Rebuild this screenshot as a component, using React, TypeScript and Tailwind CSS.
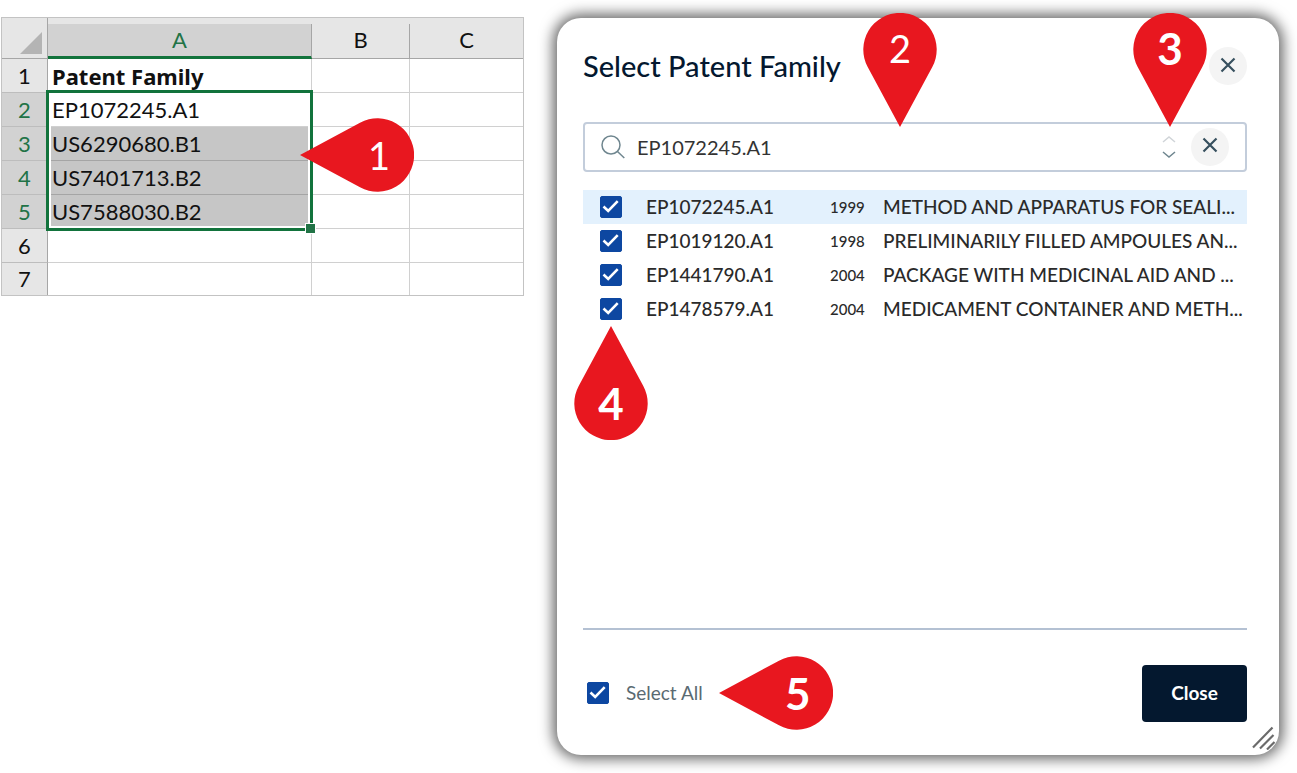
import React, { useState } from "react";

type Direction = "down" | "up" | "left";

const DROP: Record<Direction, { viewBox: string; path: string; size: string; label: string }> = {
  down: {
    viewBox: "0 0 74 114",
    path: "M37 114 L4.7 54 A36.7 36.7 0 1 1 69.3 54 Z",
    size: "h-[114px] w-[74px]",
    label: "inset-x-0 top-0 pb-1",
  },
  up: {
    viewBox: "0 0 74 114",
    path: "M37 0 L4.7 60 A36.7 36.7 0 1 0 69.3 60 Z",
    size: "h-[114px] w-[74px]",
    label: "inset-x-0 bottom-0",
  },
  left: {
    viewBox: "0 0 114 74",
    path: "M0 37 L60 4.7 A36.7 36.7 0 1 1 60 69.3 Z",
    size: "h-[74px] w-[114px]",
    label: "inset-y-0 right-0 pl-1",
  },
};

function Marker({
  n,
  direction,
  bold = false,
  className = "",
}: {
  n: number;
  direction: Direction;
  bold?: boolean;
  className?: string;
}) {
  const d = DROP[direction];
  return (
    <span className={`pointer-events-none block ${d.size} ${className}`}>
      <svg viewBox={d.viewBox} className="block h-full w-full" aria-hidden="true">
        <path d={d.path} fill="#e8171f" />
      </svg>
      <span
        className={`absolute flex h-[74px] w-[74px] items-center justify-center leading-none text-white ${d.label} ${
          bold ? "text-[44px] font-bold" : "text-[38px]"
        }`}
      >
        {n}
      </span>
    </span>
  );
}

const SHEET_ROWS = [
  { n: 1, value: "Patent Family" },
  { n: 2, value: "EP1072245.A1" },
  { n: 3, value: "US6290680.B1" },
  { n: 4, value: "US7401713.B2" },
  { n: 5, value: "US7588030.B2" },
  { n: 6, value: "" },
  { n: 7, value: "" },
];

function Spreadsheet() {
  return (
    <div className="relative mt-[17px] ml-px w-[523px] shrink-0 border border-[#c3c3c3] text-[22px] text-[#111]">
      <table className="w-full table-fixed border-separate border-spacing-0">
        <colgroup>
          <col className="w-[46px]" />
          <col className="w-[264px]" />
          <col className="w-[98px]" />
          <col />
        </colgroup>
        <thead>
          <tr className="bg-[#e6e6e6]">
            <th className="border-r border-b border-[#a6a6a6] p-0 align-bottom">
              <svg viewBox="0 0 22 22" className="mb-1 ml-[18px] h-[22px] w-[22px]" aria-hidden="true">
                <path d="M22 0 V22 H0 Z" fill="#b4b4b4" />
              </svg>
            </th>
            <th className="p-0 pt-[6px] font-normal text-[#217346]">
              <div className="h-[35px] border-r border-b-3 border-r-[#a6a6a6] border-b-[#12733c] bg-[#d2d2d2] leading-8">A</div>
            </th>
            <th className="p-0 pt-[6px] font-normal">
              <div className="h-[35px] border-r border-b border-[#a6a6a6] leading-8">B</div>
            </th>
            <th className="p-0 pt-[6px] font-normal">
              <div className="h-[35px] border-b border-[#a6a6a6] leading-8">C</div>
            </th>
          </tr>
        </thead>
        <tbody>
          {SHEET_ROWS.map(({ n, value }) => {
            const selected = n >= 2 && n <= 5;
            const shaded = n >= 3 && n <= 5;
            const line = n === 7 ? "border-b-0 h-8" : "border-b h-[34px]";
            return (
              <tr key={n} className="leading-8">
                <th
                  className={`border-r border-r-[#a6a6a6] border-b-[#bdbdbd] p-0 font-normal ${line} ${
                    selected ? "bg-[#d2d2d2] text-[#217346]" : "bg-[#e6e6e6]"
                  }`}
                >
                  {n}
                </th>
                <td
                  className={`border-r py-0 pr-0 pl-1 ${line} ${
                    n === 1 ? "font-['Noto_Sans','Open_Sans',sans-serif] font-bold" : ""
                  } ${shaded ? "border-[#a5a5a5] bg-[#c6c6c6]" : "border-[#d0d0d0]"}`}
                >
                  {value}
                </td>
                <td className={`border-r border-[#d0d0d0] p-0 ${line}`} />
                <td className={`border-[#d0d0d0] p-0 ${line}`} />
              </tr>
            );
          })}
        </tbody>
      </table>
      <div className="pointer-events-none absolute top-[72px] left-[44px] h-[141px] w-[267px] border-3 border-[#12733c]">
        <div className="h-full border-2 border-t-0 border-white" />
        <div className="absolute -right-[6px] -bottom-[6px] h-[11px] w-[11px] border border-white bg-[#217346]" />
      </div>
      <Marker n={1} direction="left" className="absolute top-[100px] left-[298px]" />
    </div>
  );
}

function Check({
  id,
  checked,
  onChange,
}: {
  id: string;
  checked: boolean;
  onChange: () => void;
}) {
  return (
    <span className="grid h-[22px] w-[22px] shrink-0 place-items-center">
      <input
        id={id}
        type="checkbox"
        checked={checked}
        onChange={onChange}
        className="col-start-1 row-start-1 h-[22px] w-[22px] appearance-none rounded-xs border border-[#0d47a1] bg-white checked:bg-[#0d47a1]"
      />
      {checked && (
        <svg viewBox="0 0 22 22" className="pointer-events-none col-start-1 row-start-1 h-[22px] w-[22px]" aria-hidden="true">
          <path d="M3.5 10.5 L8.2 15 L17.7 5.2" fill="none" stroke="#fff" strokeWidth="2.6" />
        </svg>
      )}
    </span>
  );
}

function Cross() {
  return (
    <svg viewBox="0 0 16 16" className="mb-[3px] h-4 w-4" aria-hidden="true">
      <path d="M1.5 1.5 L14.5 14.5 M14.5 1.5 L1.5 14.5" stroke="#37505f" strokeWidth="2.2" fill="none" />
    </svg>
  );
}

const PATENTS = [
  { id: "EP1072245.A1", year: 1999, title: "METHOD AND APPARATUS FOR SEALI..." },
  { id: "EP1019120.A1", year: 1998, title: "PRELIMINARILY FILLED AMPOULES AN..." },
  { id: "EP1441790.A1", year: 2004, title: "PACKAGE WITH MEDICINAL AID AND ..." },
  { id: "EP1478579.A1", year: 2004, title: "MEDICAMENT CONTAINER AND METH..." },
];

function PatentDialog() {
  const [query, setQuery] = useState("EP1072245.A1");
  const [picked, setPicked] = useState<string[]>(PATENTS.map((p) => p.id));
  const all = picked.length === PATENTS.length;
  const toggle = (id: string) =>
    setPicked((s) => (s.includes(id) ? s.filter((x) => x !== id) : [...s, id]));

  return (
    <section
      role="dialog"
      aria-labelledby="dialog-title"
      className="relative mt-[18px] mr-[18px] ml-[33px] min-w-0 flex-1 rounded-3xl bg-white pr-8 pb-[25px] pl-[26px] shadow-[0_0_14px_4px_rgba(0,0,0,0.6)]"
    >
      <header className="flex items-center justify-between pt-7">
        <h1 id="dialog-title" className="text-[29px] leading-10 font-medium text-[#04182f]">
          Select Patent Family
        </h1>
        <button
          type="button"
          aria-label="Close dialog"
          className="flex h-[38px] w-[38px] items-center justify-center rounded-full bg-[#f4f4f4]"
        >
          <Cross />
        </button>
      </header>

      <div className="relative mt-9 flex h-[50px] items-center rounded-sm border-2 border-[#c3cddb] px-4 pb-px">
        <svg viewBox="0 0 24 24" className="h-6 w-6 shrink-0" fill="none" stroke="#6f868f" strokeWidth="1.5" aria-hidden="true">
          <circle cx="10" cy="10" r="9" />
          <path d="M16.5 16.5 L23.3 23" />
        </svg>
        <input
          type="text"
          aria-label="Search patent family"
          value={query}
          onChange={(e) => setQuery(e.target.value)}
          className="ml-3 min-w-0 flex-1 bg-transparent text-[20px] text-[#333] outline-none"
        />
        <div className="flex w-4 flex-col gap-2">
          <button type="button" aria-label="Previous match" className="block">
            <svg viewBox="0 0 14 8" className="mx-auto h-2 w-[14px]" fill="none" stroke="#d0d4d8" strokeWidth="1.5" aria-hidden="true">
              <path d="M1 7 L7 2 L13 7" />
            </svg>
          </button>
          <button type="button" aria-label="Next match" className="block">
            <svg viewBox="0 0 14 8" className="mx-auto h-2 w-[14px]" fill="none" stroke="#6f868f" strokeWidth="1.5" aria-hidden="true">
              <path d="M1 1 L7 6 L13 1" />
            </svg>
          </button>
        </div>
        <button
          type="button"
          aria-label="Clear search"
          onClick={() => setQuery("")}
          className="ml-[14px] flex h-[38px] w-[38px] items-center justify-center rounded-full bg-[#f4f4f4]"
        >
          <Cross />
        </button>
        <Marker n={2} direction="down" className="absolute bottom-[43px] left-[278px]" />
        <Marker n={3} direction="down" bold className="absolute right-[38px] bottom-[43px]" />
      </div>

      <div className="relative mt-[18px] min-h-[440px] border-b-2 border-[#b4c1d3]">
        <ul>
          {PATENTS.map((p, i) => (
            <li key={p.id} className={i === 0 ? "bg-[#e3f1fd]" : ""}>
              <label htmlFor={p.id} className="flex h-[34px] items-center pl-[17px] text-[19px] font-medium text-[#2a2a2a]">
                <Check id={p.id} checked={picked.includes(p.id)} onChange={() => toggle(p.id)} />
                <span className="ml-6 w-[184px] shrink-0">{p.id}</span>
                <span className="w-[53px] shrink-0 text-[15px]">{p.year}</span>
                <span className="min-w-0 truncate">{p.title}</span>
              </label>
            </li>
          ))}
        </ul>
        <Marker n={4} direction="up" bold className="absolute top-[136px] -left-[9px]" />
      </div>

      <footer className="mt-[26px] flex items-center">
        <label htmlFor="select-all" className="flex items-center gap-[17px] pl-1 text-[19px] text-[#5a6a72]">
          <Check id="select-all" checked={all} onChange={() => setPicked(all ? [] : PATENTS.map((p) => p.id))} />
          Select All
        </label>
        <Marker n={5} direction="left" bold className="relative ml-4" />
        <button type="button" className="ml-auto h-[57px] w-[105px] rounded-sm bg-[#04182f] text-[19px] font-bold text-white">
          Close
        </button>
      </footer>

      <svg viewBox="0 0 24 24" className="absolute right-[3px] bottom-[5px] h-6 w-6" stroke="#6b6b6b" strokeWidth="2.2" aria-hidden="true">
        <path d="M1 21.5 L20.5 1.5 M8 22.5 L21.5 9 M15 23.5 L22.5 16" />
      </svg>
    </section>
  );
}

export default function App() {
  return (
    <main className="flex min-h-screen items-start bg-white font-['Lato','Open_Sans',sans-serif]">
      <Spreadsheet />
      <PatentDialog />
    </main>
  );
}
